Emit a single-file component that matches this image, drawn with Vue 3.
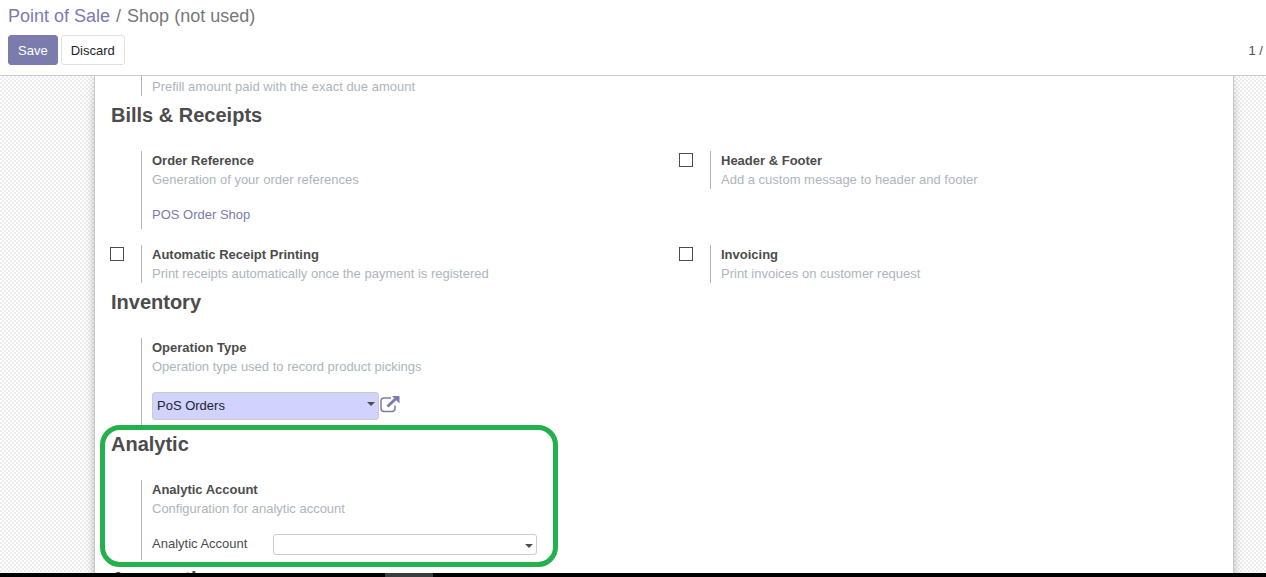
<script setup>
import { ref } from 'vue'

const headerFooter = ref(false)
const autoPrint = ref(false)
const invoicing = ref(false)
const operationType = ref('PoS Orders')
const analyticAccount = ref('')
</script>

<template>
  <div class="app">
    <header class="control-panel">
      <nav class="breadcrumb" aria-label="Breadcrumb">
        <a href="#">Point of Sale</a>
        <span class="sep">/</span>
        <span>Shop (not used)</span>
      </nav>
      <div class="toolbar">
        <div class="buttons">
          <button type="button" class="btn primary">Save</button>
          <button type="button" class="btn">Discard</button>
        </div>
        <span class="pager">1 /</span>
      </div>
    </header>

    <main class="content">
      <form class="sheet">
        <div class="row">
          <div class="setting clipped">
            <div class="pane">
              <p class="desc">Prefill amount paid with the exact due amount</p>
            </div>
          </div>
        </div>

        <section>
          <h2>Bills &amp; Receipts</h2>
          <div class="row">
            <div class="setting">
              <div class="pane">
                <span class="label">Order Reference</span>
                <p class="desc">Generation of your order references</p>
                <div class="field"><a href="#">POS Order Shop</a></div>
              </div>
            </div>
            <div class="setting">
              <input id="header-footer" v-model="headerFooter" type="checkbox">
              <div class="pane">
                <label class="label" for="header-footer">Header &amp; Footer</label>
                <p class="desc">Add a custom message to header and footer</p>
              </div>
            </div>
            <div class="setting">
              <input id="auto-print" v-model="autoPrint" type="checkbox">
              <div class="pane">
                <label class="label" for="auto-print">Automatic Receipt Printing</label>
                <p class="desc">Print receipts automatically once the payment is registered</p>
              </div>
            </div>
            <div class="setting">
              <input id="invoicing" v-model="invoicing" type="checkbox">
              <div class="pane">
                <label class="label" for="invoicing">Invoicing</label>
                <p class="desc">Print invoices on customer request</p>
              </div>
            </div>
          </div>
        </section>

        <section>
          <h2>Inventory</h2>
          <div class="row">
            <div class="setting">
              <div class="pane">
                <label class="label" for="operation-type">Operation Type</label>
                <p class="desc">Operation type used to record product pickings</p>
                <div class="field">
                  <div class="picker required">
                    <select id="operation-type" v-model="operationType">
                      <option>PoS Orders</option>
                    </select>
                    <svg class="caret" viewBox="0 0 8 4" aria-hidden="true"><path d="M0 0h8L4 4z" /></svg>
                  </div>
                  <button type="button" class="external" aria-label="Open operation type">
                    <svg viewBox="0 0 20 18" aria-hidden="true">
                      <path class="frame" d="M11 3H4Q1 3 1 6V13.500Q1 16.500 4 16.500H12Q15 16.500 15 13.500V10.500" />
                      <path class="shaft" d="M7.500 11.500 16 3.500" />
                      <path class="head" d="M12 1H19.500V8.500z" />
                    </svg>
                  </button>
                </div>
              </div>
            </div>
          </div>
        </section>

        <section class="highlighted">
          <h2>Analytic</h2>
          <div class="row">
            <div class="setting">
              <div class="pane">
                <span class="label">Analytic Account</span>
                <p class="desc">Configuration for analytic account</p>
                <div class="field">
                  <label class="field-label" for="analytic-account">Analytic Account</label>
                  <div class="picker">
                    <select id="analytic-account" v-model="analyticAccount">
                      <option value=""></option>
                    </select>
                    <svg class="caret" viewBox="0 0 8 4" aria-hidden="true"><path d="M0 0h8L4 4z" /></svg>
                  </div>
                </div>
              </div>
            </div>
          </div>
        </section>

        <section>
          <h2>Accounting</h2>
        </section>
      </form>
    </main>

    <div class="taskbar"><span></span></div>
  </div>
</template>

<style>
body {
  margin: 0;
}
</style>

<style scoped>
.app {
  display: flex;
  flex-direction: column;
  height: 100vh;
  overflow: hidden;
  background: #fff;
  color: #4c4c4c;
  font: 13px/19px "Liberation Sans", Arial, sans-serif;
}

a {
  color: #7c7bad;
  text-decoration: none;
}

.control-panel {
  flex: none;
  padding: 4px 3px 10px 8px;
  border-bottom: 1px solid #c8c8d0;
}

.breadcrumb {
  display: flex;
  gap: 6px;
  color: #777;
  font-size: 18px;
  line-height: 24px;
}

.toolbar {
  display: flex;
  align-items: center;
  justify-content: space-between;
  margin-top: 7px;
}

.buttons {
  display: flex;
  gap: 3px;
}

.btn {
  height: 30px;
  padding: 0 9px;
  border: 1px solid #dee0e6;
  border-radius: 3px;
  background: #fff;
  color: #212529;
  font: inherit;
}

.btn.primary {
  border-color: #7c7bad;
  background: #7c7bad;
  color: #fff;
}

.content {
  flex: 1;
  min-height: 0;
  overflow: hidden;
  background: repeating-conic-gradient(#ededed 0 25%, #fff 0 50%) 0 0 / 4px 4px;
}

.sheet {
  min-height: 100%;
  margin: 0 32px 0 94px;
  border: solid #c8c8d3;
  border-width: 0 1px;
  background: #fff;
  box-shadow: 0 5px 20px -15px #000, 0 0 8px rgba(0, 0, 0, 0.12);
}

.row {
  display: grid;
  grid-template-columns: 1fr 1fr;
  row-gap: 16px;
  align-items: start;
}

.setting {
  position: relative;
  padding-left: 46px;
}

.setting input {
  position: absolute;
  top: 2px;
  left: 15px;
  width: 14px;
  height: 14px;
  margin: 0;
  border: 1px solid #4c4c4c;
  background: #fff;
  appearance: none;
}

.setting input:checked {
  background: #7c7bad;
}

.pane {
  padding-left: 10px;
  border-left: 1px solid #b4b4b4;
}

.clipped .pane {
  padding-top: 1px;
}

h2 {
  margin: 0;
  padding: 7px 16px 24px;
  font-size: 20px;
  line-height: 24px;
}

.label {
  display: block;
  font-weight: bold;
}

.desc {
  margin: 0;
  color: #adb5bd;
}

.field {
  display: flex;
  align-items: flex-start;
  padding: 16px 0 5px;
}

.field-label {
  width: 121px;
}

.picker {
  position: relative;
  width: 264px;
}

.picker select {
  display: block;
  width: 100%;
  height: 21px;
  padding: 0 4px;
  border: 1px solid #ccc;
  border-radius: 3px;
  background: #fff;
  color: #212529;
  font: inherit;
  appearance: none;
}

.picker.required {
  width: 227px;
}

.picker.required select {
  height: 28px;
  padding-bottom: 2px;
  background: #d2d2ff;
}

.caret {
  position: absolute;
  right: 4px;
  bottom: 7px;
  width: 8px;
  height: 4px;
  fill: #4c4c4c;
  pointer-events: none;
}

.required .caret {
  bottom: 14px;
}

.external {
  height: 18px;
  margin: 3px 0 0 1px;
  padding: 0;
  border: 0;
  background: none;
}

.external svg {
  display: block;
  width: 20px;
  height: 18px;
  fill: none;
  stroke: #7c7bad;
}

.external .frame {
  stroke-width: 1.5;
}

.external .shaft {
  stroke-width: 3;
}

.external .head {
  fill: #7c7bad;
  stroke: none;
}

.highlighted {
  position: relative;
}

.highlighted::after {
  content: "";
  position: absolute;
  top: 0;
  bottom: -7px;
  left: 5px;
  box-sizing: border-box;
  width: 458px;
  border: 5px solid #22b14c;
  border-radius: 20px;
  pointer-events: none;
}

.taskbar {
  flex: none;
  height: 4px;
  padding-left: 385px;
  background: #000;
}

.taskbar span {
  display: block;
  width: 48px;
  height: 4px;
  background: #3c3c3c;
}
</style>
